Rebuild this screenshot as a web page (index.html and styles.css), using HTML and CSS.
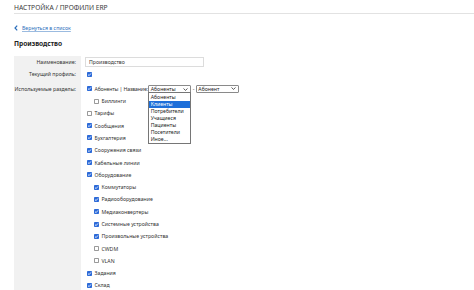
FILE: index.html
```html
<!DOCTYPE html>
<html lang="ru">
<head>
<meta charset="utf-8">
<link rel="stylesheet" href="styles.css">
</head>
<body>
<div class="page">
  <div class="title">НАСТРОЙКА / ПРОФИЛИ ERP</div>
  <a class="back" href="#"><svg class="chev" viewBox="0 0 4 6" width="4" height="6"><path d="M3.2 0.6 L1 3 L3.2 5.4" fill="none" stroke="#2a6ebb" stroke-width="1.2"/></svg><span class="back-text">Вернуться в список</span></a>
  <h1 class="heading">Производство</h1>
  <div class="form">
    <div class="label row1">Наименование:</div>
    <div class="value row1"><div class="input">Производство</div></div>

    <div class="label row2">Текущий профиль:</div>
    <div class="value row2"><span class="cb on"></span></div>

    <div class="label row3">Используемые разделы:</div>
    <div class="value row3">
      <div class="item">
        <span class="cb on"></span><span class="txt tight">Абоненты | Название:</span>
        <span class="select-wrap">
          <span class="select s1">Абоненты<svg class="arr" viewBox="0 0 5 3" width="5" height="3"><path d="M0.5 0.5 L2.5 2.4 L4.5 0.5" fill="none" stroke="#333" stroke-width="0.8"/></svg></span>
          <div class="dropdown">
            <div class="opt">Абоненты</div>
            <div class="opt sel">Клиенты</div>
            <div class="opt">Потребители</div>
            <div class="opt">Учащиеся</div>
            <div class="opt">Пациенты</div>
            <div class="opt">Посетители</div>
            <div class="opt">Иное...</div>
          </div>
        </span>
        <span class="dash">-</span>
        <span class="select s2">Абонент<svg class="arr" viewBox="0 0 5 3" width="5" height="3"><path d="M0.5 0.5 L2.5 2.4 L4.5 0.5" fill="none" stroke="#333" stroke-width="0.8"/></svg></span>
      </div>
      <div class="item child"><span class="cb"></span><span class="txt">Биллинги</span></div>
      <div class="item"><span class="cb"></span><span class="txt">Тарифы</span></div>
      <div class="item"><span class="cb on"></span><span class="txt">Сообщения</span></div>
      <div class="item"><span class="cb on"></span><span class="txt">Бухгалтерия</span></div>
      <div class="item"><span class="cb on"></span><span class="txt">Сооружения связи</span></div>
      <div class="item"><span class="cb on"></span><span class="txt">Кабельные линии</span></div>
      <div class="item"><span class="cb on"></span><span class="txt">Оборудование</span></div>
      <div class="item child"><span class="cb on"></span><span class="txt">Коммутаторы</span></div>
      <div class="item child"><span class="cb on"></span><span class="txt">Радиооборудование</span></div>
      <div class="item child"><span class="cb on"></span><span class="txt">Медиаконвертеры</span></div>
      <div class="item child"><span class="cb on"></span><span class="txt">Системные устройства</span></div>
      <div class="item child"><span class="cb on"></span><span class="txt">Произвольные устройства</span></div>
      <div class="item child"><span class="cb"></span><span class="txt">CWDM</span></div>
      <div class="item child"><span class="cb"></span><span class="txt">VLAN</span></div>
      <div class="item"><span class="cb on"></span><span class="txt">Задания</span></div>
      <div class="item"><span class="cb on"></span><span class="txt">Склад</span></div>
    </div>
  </div>
</div>
</body>
</html>
```

FILE: styles.css
```css
html, body {
  margin: 0;
  padding: 0;
  background: #fff;
  overflow: hidden;
}
body {
  font-family: "Noto Sans", "Open Sans", sans-serif;
  color: #333;
  font-size: 5.2px;
}
.page {
  padding-left: 14px;
}
.title {
  font-size: 6.7px;
  line-height: 9px;
  padding-top: 3px;
  box-sizing: border-box;
  border-bottom: 1px solid #e2e2e2;
  color: #3a3a3a;
  height: 14px;
}
.back {
  display: flex;
  align-items: center;
  gap: 4px;
  margin-top: 11px;
  height: 6px;
  color: #2a6ebb;
  text-decoration: none;
  line-height: 6px;
}
.back-text {
  text-decoration: underline;
  text-decoration-color: #9bbbe0;
}
.heading {
  margin: 0;
  margin-top: 8px;
  font-size: 6.6px;
  line-height: 9px;
  font-weight: bold;
  color: #222;
}
.form {
  margin-top: 8px;
  display: grid;
  grid-template-columns: 67px 1fr;
  grid-template-rows: 12px 12px 1fr;
  min-height: 300px;
}
.label {
  background: #f1f1f1;
  text-align: right;
  padding-right: 5px;
  color: #333;
  box-sizing: border-box;
  white-space: nowrap;
}
.value {
  padding-left: 4px;
}
.row1, .row2 {
  height: 12px;
  display: flex;
  align-items: center;
}
.label.row1, .label.row2 { justify-content: flex-end; }
.label.row3 {
  padding-top: 5.5px;
  line-height: 6px;
}
.value.row3 {
  padding-top: 2.6px;
}
.input {
  width: 119px;
  height: 10px;
  box-sizing: border-box;
  border: 1px solid #dcdcdc;
  padding-left: 3px;
  line-height: 8px;
  color: #333;
}
.item {
  height: 12.3px;
  display: flex;
  align-items: center;
  white-space: nowrap;
}
.item.child {
  padding-left: 7px;
}
.cb {
  display: inline-block;
  width: 5px;
  height: 5px;
  box-sizing: border-box;
  border: 0.6px solid #9a9a9a;
  border-radius: 0.8px;
  background: #fff;
  margin-left: 2px;
  margin-right: 2.5px;
  flex: none;
}
.cb.on {
  border: none;
  background: #2c6ad8 url("data:image/svg+xml;utf8,<svg xmlns='http://www.w3.org/2000/svg' viewBox='0 0 10 10'><path d='M2 5.2 L4.2 7.3 L8 2.8' fill='none' stroke='white' stroke-width='1.6'/></svg>") center/100% 100% no-repeat;
}
.txt {
  line-height: 6px;
}
.txt.tight {
  letter-spacing: -0.15px;
}
.select-wrap {
  position: relative;
  display: inline-block;
  margin-left: 0.3px;
}
.select {
  display: inline-flex;
  align-items: center;
  justify-content: space-between;
  box-sizing: border-box;
  height: 8px;
  border: 0.7px solid #8a8a8a;
  border-radius: 1px;
  padding: 0 2px 0 1.5px;
  line-height: 6px;
  background: #fff;
  color: #222;
  vertical-align: middle;
}
.s1 { width: 43px; }
.s2 { width: 43px; }
.dash {
  margin: 0 1.5px;
}
.arr { flex: none; }
.dropdown {
  position: absolute;
  left: 0;
  top: 8px;
  width: 43px;
  box-sizing: border-box;
  border: 0.7px solid #767676;
  background: #fff;
  z-index: 5;
  padding: 0.3px 0;
}
.opt {
  height: 7px;
  line-height: 7px;
  padding-left: 1.5px;
  color: #222;
}
.opt.sel {
  background: #1e6fd9;
  color: #fff;
}
```
